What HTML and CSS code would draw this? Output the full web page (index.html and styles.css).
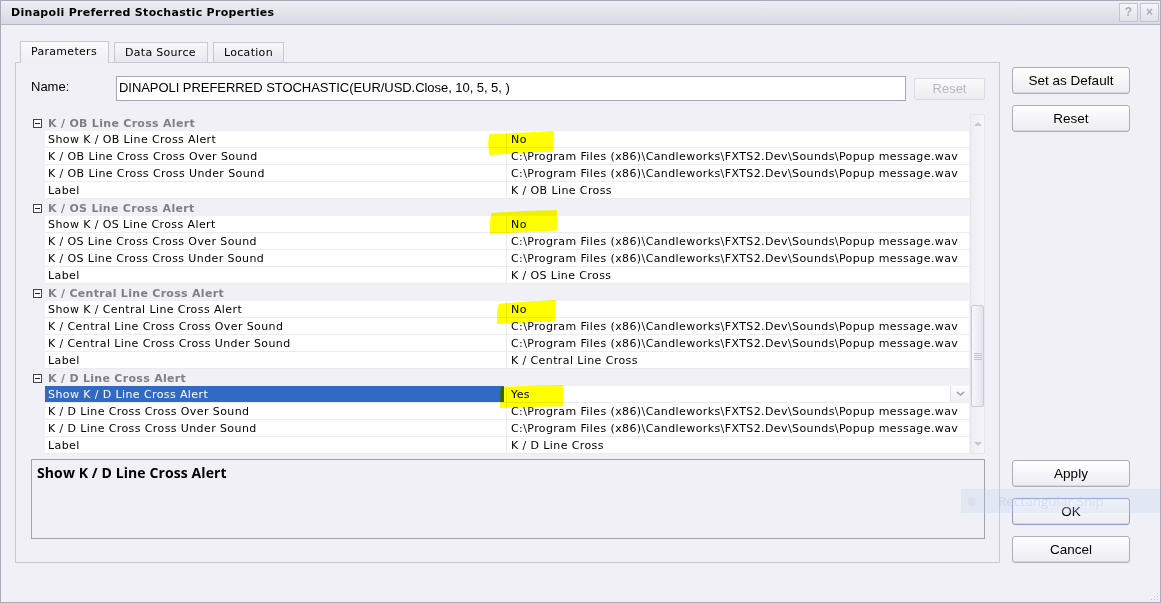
FILE: index.html
```html
<!DOCTYPE html>
<html lang="en">
  <head>
    <meta charset="UTF-8" />
    <title>Dinapoli Preferred Stochastic Properties</title>
    <link rel="stylesheet" href="styles.css">
  </head>

  <body>
    <div class="window">
      <div class="titlebar">
        <span class="title">Dinapoli Preferred Stochastic Properties</span>
        <div class="title-btns">
          <span class="tbtn">?</span>
          <span class="tbtn">&#215;</span>
        </div>
      </div>

      <div class="content">
        <div class="main">
          <div class="tabs">
            <div class="tab active">Parameters</div>
            <div class="tab">Data Source</div>
            <div class="tab">Location</div>
          </div>

          <div class="panel">
            <div class="name-row">
              <label class="name-label">Name:</label>
              <div class="name-input">DINAPOLI PREFERRED STOCHASTIC(EUR/USD.Close, 10, 5, 5, )</div>
              <button class="small-btn" disabled>Reset</button>
            </div>

            <div class="grid-wrap">
              <div class="props">
                <div class="cat"><span class="expander"></span>K / OB Line Cross Alert</div>
                <div class="row"><div class="pname">Show K / OB Line Cross Alert</div><div class="pval">No</div></div>
                <div class="row"><div class="pname">K / OB Line Cross Cross Over Sound</div><div class="pval">C:\Program Files (x86)\Candleworks\FXTS2.Dev\Sounds\Popup message.wav</div></div>
                <div class="row"><div class="pname">K / OB Line Cross Cross Under Sound</div><div class="pval">C:\Program Files (x86)\Candleworks\FXTS2.Dev\Sounds\Popup message.wav</div></div>
                <div class="row"><div class="pname">Label</div><div class="pval">K / OB Line Cross</div></div>

                <div class="cat"><span class="expander"></span>K / OS Line Cross Alert</div>
                <div class="row"><div class="pname">Show K / OS Line Cross Alert</div><div class="pval">No</div></div>
                <div class="row"><div class="pname">K / OS Line Cross Cross Over Sound</div><div class="pval">C:\Program Files (x86)\Candleworks\FXTS2.Dev\Sounds\Popup message.wav</div></div>
                <div class="row"><div class="pname">K / OS Line Cross Cross Under Sound</div><div class="pval">C:\Program Files (x86)\Candleworks\FXTS2.Dev\Sounds\Popup message.wav</div></div>
                <div class="row"><div class="pname">Label</div><div class="pval">K / OS Line Cross</div></div>

                <div class="cat"><span class="expander"></span>K / Central Line Cross Alert</div>
                <div class="row"><div class="pname">Show K / Central Line Cross Alert</div><div class="pval">No</div></div>
                <div class="row"><div class="pname">K / Central Line Cross Cross Over Sound</div><div class="pval">C:\Program Files (x86)\Candleworks\FXTS2.Dev\Sounds\Popup message.wav</div></div>
                <div class="row"><div class="pname">K / Central Line Cross Cross Under Sound</div><div class="pval">C:\Program Files (x86)\Candleworks\FXTS2.Dev\Sounds\Popup message.wav</div></div>
                <div class="row"><div class="pname">Label</div><div class="pval">K / Central Line Cross</div></div>

                <div class="cat"><span class="expander"></span>K / D Line Cross Alert</div>
                <div class="row selected"><div class="pname">Show K / D Line Cross Alert</div><div class="pval">Yes<span class="drop"><svg width="9" height="6" viewBox="0 0 9 6"><path d="M1 1 L4.5 4 L8 1" fill="none" stroke="#9a9cab" stroke-width="1.6"/></svg></span></div></div>
                <div class="row"><div class="pname">K / D Line Cross Cross Over Sound</div><div class="pval">C:\Program Files (x86)\Candleworks\FXTS2.Dev\Sounds\Popup message.wav</div></div>
                <div class="row"><div class="pname">K / D Line Cross Cross Under Sound</div><div class="pval">C:\Program Files (x86)\Candleworks\FXTS2.Dev\Sounds\Popup message.wav</div></div>
                <div class="row"><div class="pname">Label</div><div class="pval">K / D Line Cross</div></div>
              </div>

              <div class="vscroll">
                <div class="arrow up"></div>
                <div class="thumb"><span class="grip"></span></div>
                <div class="arrow down"></div>
              </div>

              <!-- highlighter marks -->
              <div class="mark mark1"></div>
              <div class="mark mark2"></div>
              <div class="mark mark3"></div>
              <div class="mark mark4"></div>
            </div>

            <div class="desc">
              <b>Show K / D Line Cross Alert</b>
            </div>
          </div>
        </div>

        <div class="side">
          <div class="btn-group">
            <button class="btn">Set as Default</button>
            <button class="btn">Reset</button>
          </div>
          <div class="btn-group bottom">
            <button class="btn">Apply</button>
            <button class="btn default">OK</button>
            <button class="btn">Cancel</button>
          </div>
        </div>
      </div>

      <div class="snip"><span class="snip-dot"></span>Rectangular Snip</div>
      <div class="grip-corner"></div>
    </div>
  </body>
</html>
```

FILE: styles.css
```css
* {
  box-sizing: border-box;
}

body {
  margin: 0;
  background-color: #f0f0f6;
  font-family: "DejaVu Sans", Verdana, sans-serif;
  font-size: 11px;
  color: #000;
}

.window {
  position: relative;
  width: 1161px;
  height: 603px;
  border: 1px solid #a9acb8;
  overflow: hidden;
}

/* title bar */
.titlebar {
  display: flex;
  align-items: center;
  justify-content: space-between;
  height: 24px;
  padding: 0 1px 0 10px;
  background: linear-gradient(#eceef3, #d7dae3);
  border-bottom: 1px solid #b3b7c4;
}

.title {
  font-weight: bold;
  font-size: 11px;
  letter-spacing: 0.3px;
}

.title-btns {
  display: flex;
  gap: 2px;
}

.tbtn {
  width: 19px;
  height: 19px;
  border: 1px solid #c2c5d0;
  background: linear-gradient(#f4f5f8, #e0e2ea);
  color: #a8abb8;
  font-family: "Liberation Sans", Arial, sans-serif;
  font-weight: bold;
  font-size: 12px;
  text-align: center;
  line-height: 17px;
}

/* body */
.content {
  display: flex;
  padding-top: 16px;
}

.main {
  width: 999px;
  padding-left: 14px;
}

.tabs {
  display: flex;
  gap: 5px;
  height: 21px;
  padding-left: 5px;
}

.tab {
  height: 20px;
  margin-top: 1px;
  padding: 0 10px;
  border: 1px solid #c6c8d2;
  border-bottom: none;
  background: linear-gradient(#f8f8fb, #e6e6ed);
  line-height: 19px;
  letter-spacing: 0.3px;
}

.tab:nth-child(1) { width: 89px; }
.tab:nth-child(2) { width: 94px; }
.tab:nth-child(3) { width: 71px; }

.tab.active {
  height: 22px;
  margin-top: 0;
  margin-bottom: -1px;
  background: linear-gradient(#fbfbfd, #eeeef4);
  position: relative;
}

.panel {
  height: 501px;
  border: 1px solid #c8cad4;
  padding: 13px 14px 0 15px;
}

.name-row {
  display: flex;
  align-items: center;
  height: 25px;
}

.name-label {
  width: 85px;
  font-family: "Liberation Sans", Arial, sans-serif;
  font-size: 13px;
  margin-top: -4px;
}

.name-input {
  width: 790px;
  height: 25px;
  border: 1px solid #a6a9b4;
  background: #fff;
  padding-left: 2px;
  font-family: "Liberation Sans", Arial, sans-serif;
  font-size: 13px;
  letter-spacing: -0.05px;
  line-height: 22px;
}

.small-btn {
  width: 71px;
  height: 22px;
  margin-left: 8px;
  border: 1px solid #d9dae2;
  border-radius: 2px;
  background: linear-gradient(#fbfbfc, #ececf1);
  color: #b4b6c0;
  font-family: "Liberation Sans", Arial, sans-serif;
  font-size: 13px;
}

/* property grid */
.grid-wrap {
  position: relative;
  display: flex;
  margin: 13px 0 0 -1px;
  height: 340px;
  letter-spacing: 0.4px;
}

.props {
  width: 939px;
}

.cat {
  display: flex;
  align-items: center;
  height: 17px;
  padding-top: 1px;
  color: #7f7f86;
  font-weight: bold;
  letter-spacing: 0.3px;
}

.expander {
  position: relative;
  width: 9px;
  height: 9px;
  margin: 0 6px 0 3px;
  border: 1px solid #444;
  background: #fff;
}

.expander::after {
  content: "";
  position: absolute;
  left: 1px;
  top: 3px;
  width: 5px;
  height: 1px;
  background: #222;
}

.row {
  display: grid;
  grid-template-columns: 461px 1fr;
  height: 17px;
  margin-left: 15px;
  background: #fff;
  border-bottom: 1px solid #ebebf0;
}

.pname {
  padding: 1px 0 0 3px;
  line-height: 15px;
  white-space: nowrap;
}

.pval {
  position: relative;
  padding: 1px 0 0 4px;
  border-left: 1px solid #ebebf0;
  line-height: 15px;
  white-space: nowrap;
}

.row.selected .pname {
  background: linear-gradient(to right, #316ac5 459px, #fff 459px);
  color: #fff;
}

.drop {
  position: absolute;
  right: 0;
  top: 0;
  width: 19px;
  height: 16px;
  border-left: 1px solid #dedfe6;
  background: linear-gradient(#fdfdfe, #eeeff3);
  display: flex;
  align-items: center;
  justify-content: center;
}

.vscroll {
  position: relative;
  width: 15px;
  margin-left: 1px;
  background: linear-gradient(to right, #ededf3, #f7f7fa);
  border: 1px solid #e4e4ec;
}

.arrow {
  position: absolute;
  left: 3px;
  width: 0;
  height: 0;
  border-left: 4px solid transparent;
  border-right: 4px solid transparent;
}

.arrow.up {
  top: 7px;
  border-bottom: 4px solid #c4c6d4;
}

.arrow.down {
  bottom: 7px;
  border-top: 4px solid #c4c6d4;
}

.thumb {
  position: absolute;
  left: 0;
  top: 190px;
  width: 13px;
  height: 102px;
  border: 1px solid #c9cbd8;
  border-radius: 2px;
  background: linear-gradient(to right, #f6f6fa, #e4e5ee);
}

.grip {
  position: absolute;
  left: 2px;
  top: 47px;
  width: 8px;
  height: 7px;
  background: repeating-linear-gradient(#c2c4d2 0 1px, transparent 1px 2px);
}

/* yellow highlighter strokes */
.mark {
  position: absolute;
  background: #ffff00;
  mix-blend-mode: multiply;
}

.mark1 {
  left: 458px;
  top: 17px;
  width: 66px;
  height: 24px;
  clip-path: polygon(2% 14%, 40% 8%, 70% 4%, 100% 0%, 99% 86%, 60% 90%, 2% 100%, 0% 50%);
}

.mark2 {
  left: 460px;
  top: 96px;
  width: 67px;
  height: 24px;
  clip-path: polygon(2% 12%, 50% 4%, 100% 0%, 100% 85%, 55% 92%, 0% 100%, 0% 45%);
}

.mark3 {
  left: 467px;
  top: 186px;
  width: 59px;
  height: 24px;
  clip-path: polygon(3% 16%, 50% 6%, 100% 0%, 98% 88%, 50% 94%, 0% 100%, 0% 50%);
}

.mark4 {
  left: 470px;
  top: 271px;
  width: 63px;
  height: 23px;
  clip-path: polygon(1% 8%, 55% 3%, 100% 0%, 100% 92%, 50% 96%, 0% 100%);
}

.desc {
  height: 80px;
  margin-top: 5px;
  border: 1px solid #a2a2a8;
  padding: 3px 5px;
  font-family: "Open Sans", "Segoe UI", sans-serif;
  font-size: 14px;
  letter-spacing: 0.1px;
}

/* right-hand buttons */
.side {
  display: flex;
  flex-direction: column;
  justify-content: space-between;
  height: 522px;
  padding: 26px 0 0 12px;
}

.btn-group {
  display: flex;
  flex-direction: column;
  gap: 11px;
}

.btn {
  width: 118px;
  height: 27px;
  border: 1px solid #acaebb;
  border-radius: 3px;
  background: linear-gradient(#ffffff, #ececf2);
  box-shadow: inset 0 -1px 0 #d8d9e2;
  font-family: "Liberation Sans", Arial, sans-serif;
  font-size: 13.5px;
  color: #000;
}

.btn.default {
  border-color: #9298d6;
}

/* faint screenshot-tool ghost */
.snip {
  position: absolute;
  left: 960px;
  top: 488px;
  width: 201px;
  height: 24px;
  display: flex;
  align-items: center;
  gap: 22px;
  padding-left: 6px;
  background: rgba(190, 208, 240, 0.28);
  color: rgba(140, 150, 185, 0.2);
  font-family: "Open Sans", "Segoe UI", sans-serif;
  font-size: 13.5px;
}

.snip-dot {
  width: 9px;
  height: 9px;
  border-radius: 50%;
  background: #dde1ee;
}

.grip-corner {
  position: absolute;
  right: 2px;
  bottom: 2px;
  width: 8px;
  height: 8px;
  background: radial-gradient(circle, #c4c6d2 0.8px, transparent 1px) 0 0 / 3px 3px;
  clip-path: polygon(100% 0, 100% 100%, 0 100%);
}
```
